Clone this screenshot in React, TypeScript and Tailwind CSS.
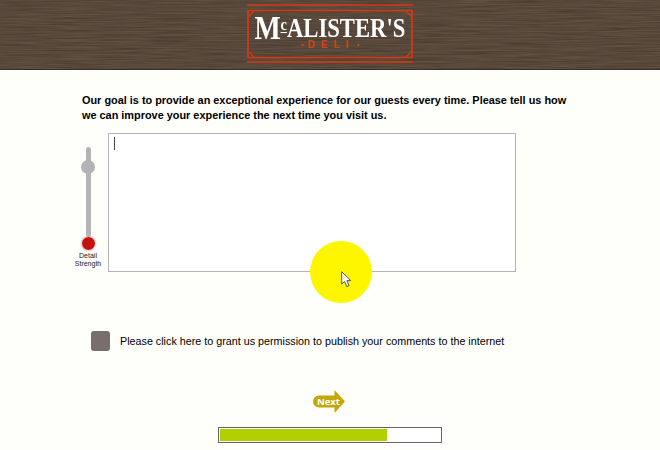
// App.tsx
function Wood() {
    return (
        <svg className="absolute inset-0 w-full h-full" width="660" height="70" aria-hidden="true">
            <filter id="grain" x="0" y="0" width="100%" height="100%" colorInterpolationFilters="sRGB">
                <feTurbulence type="fractalNoise" baseFrequency="0.02 0.7" numOctaves="3" seed="7" />
                <feColorMatrix
                    type="matrix"
                    values="0 0 0 0 0.24  0 0 0 0 0.18  0 0 0 0 0.14  1.0 0 0 0 -0.25"
                />
            </filter>
            <rect width="660" height="70" fill="#615143" />
            <rect width="660" height="70" filter="url(#grain)" />
            <rect y="69" width="660" height="1" fill="#3a3028" />
        </svg>
    );
}

function LogoFrame() {
    return (
        <svg className="absolute inset-0" width="166" height="60" viewBox="0 0 166 60" fill="none" stroke="#d23a12" aria-hidden="true">
            <path d="M0 1H166M0 58H166" strokeWidth="1.7" />
            <path d="M1 6.5H165V53.5H1Z" strokeWidth="1.7" />
            <path d="M1 13L7.5 6.5M165 13L158.5 6.5M1 47L7.5 53.5M165 47L158.5 53.5" strokeWidth="1.2" />
        </svg>
    );
}

function Logo() {
    return (
        <div className="relative w-[166px] h-[60px] flex flex-col items-center pt-[12px] font-['Liberation_Serif',serif]">
            <LogoFrame />
            <div className="flex items-start h-[24px] scale-x-[0.84] text-white font-bold leading-[24px] text-[27px] whitespace-nowrap">
                <span className="text-[33px]">M</span>
                <span className="text-[17px] leading-[18px] underline decoration-1 underline-offset-2">c</span>
                <span>ALISTER'S</span>
            </div>
            <div className="flex items-center gap-[4px] text-[#d8400f] text-[10px] leading-[10px] font-bold tracking-[6px] font-['Liberation_Sans',sans-serif]">
                <span className="text-[8px] tracking-normal">•</span>
                <span className="mr-[-6px]">DELI</span>
                <span className="text-[8px] tracking-normal ml-[4px]">•</span>
            </div>
        </div>
    );
}

function Slider() {
    return (
        <div className="w-[26px] -ml-[7px] mr-[7px] flex flex-col items-center pt-[14px]">
            <div className="relative w-[5px] h-[90px] bg-[#b4b4b4] rounded-full flex justify-center">
                <div className="absolute top-[13px] w-[14px] h-[14px] rounded-full bg-[#b3b3b6]" />
            </div>
            <div className="w-[15px] h-[15px] rounded-full bg-[#c4120c] border border-white shadow-[0_0_1px_#888] -mt-[1px]" />
            <div className="mt-[1px] text-center text-[7px] leading-[8px] text-[#222] font-['Liberation_Sans',sans-serif]">
                Detail<br />Strength
            </div>
        </div>
    );
}

export default function App() {
    return (
        <div className="relative w-[660px] h-[450px] overflow-hidden bg-[#fefefb] font-['Liberation_Sans',sans-serif]">
            <header className="relative h-[70px] flex justify-center pt-[4px]">
                <Wood />
                <Logo />
            </header>

            <main className="pl-[82px]">
                <p className="mt-[23px] w-[500px] text-[10.9px] leading-[15px] font-bold text-black">
                    Our goal is to provide an exceptional experience for our guests every time. Please tell us how we can improve your experience the next time you visit us.
                </p>

                <div className="flex mt-[10px]">
                    <Slider />
                    <div className="w-[408px] h-[139px] border border-[#b3b3bd] bg-white px-[5px] py-[3px]">
                        <div className="w-px h-[13px] bg-[#444]" />
                    </div>
                </div>

                <div className="flex items-center mt-[59px] ml-[9px]">
                    <div className="w-[19px] h-[20px] rounded-[3px] bg-[#786e6b]" />
                    <span className="ml-[10px] text-[10.75px] leading-[15px] text-black">
                        Please click here to grant us permission to publish your comments to the internet
                    </span>
                </div>

                <div className="flex justify-center w-[494px] mt-[39px]">
                    <div className="relative w-[32px] h-[23px]">
                        <svg width="32" height="23" viewBox="0 0 32 23" className="absolute inset-0" aria-hidden="true">
                            <path d="M6 5.5H21.5V0L32 11.5L21.5 23V17.5H6A6 6 0 0 1 6 5.5Z" fill="#c2a80a" />
                        </svg>
                        <span className="relative block pl-[4px] pt-[5px] text-[9.5px] leading-[13px] font-bold text-white font-['Open_Sans',sans-serif]">
                            Next
                        </span>
                    </div>
                </div>

                <div className="ml-[136px] mt-[14px] w-[224px] h-[16px] border-[1.5px] border-[#666] bg-white p-px">
                    <div className="w-[167px] h-full bg-[#b4cf00]" />
                </div>
            </main>

            {/* yellow highlight from the screen recording */}
            <div className="absolute left-[310px] top-[241px] w-[62px] h-[62px] rounded-full bg-[#fdf600]" />
            <svg className="absolute left-[341px] top-[271px]" width="11" height="17" viewBox="0 0 11 17" aria-hidden="true">
                <path d="M.7.7V13L3.6 10.4L5.7 15.6L8 14.6L5.9 9.6H9.8Z" fill="#fff" stroke="#555" strokeWidth="1" />
            </svg>
        </div>
    );
}
